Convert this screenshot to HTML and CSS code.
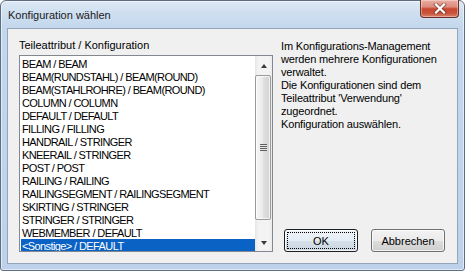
FILE: index.html
```html
<!DOCTYPE html>
<html>
<head>
<meta charset="utf-8">
<title>Konfiguration wählen</title>
<link rel="stylesheet" href="styles.css">
</head>
<body>
<div class="window">
  <div class="titlebar">
    <span class="title">Konfiguration wählen</span>
    <button class="close" aria-label="Schließen">
      <svg width="14" height="11" viewBox="0 0 14 11">
        <path d="M3 1.5 L11 9.5 M11 1.5 L3 9.5" stroke="#5a2a22" stroke-width="4" stroke-linecap="square" fill="none" opacity="0.55"/>
        <path d="M3 1.5 L11 9.5 M11 1.5 L3 9.5" stroke="#ffffff" stroke-width="2.2" stroke-linecap="square" fill="none"/>
      </svg>
    </button>
  </div>
  <div class="client">
    <div class="left">
      <div class="label">Teileattribut / Konfiguration</div>
      <div class="listbox">
        <ul class="items">
          <li>BEAM / BEAM</li>
          <li>BEAM(RUNDSTAHL) / BEAM(ROUND)</li>
          <li>BEAM(STAHLROHRE) / BEAM(ROUND)</li>
          <li>COLUMN / COLUMN</li>
          <li>DEFAULT / DEFAULT</li>
          <li>FILLING / FILLING</li>
          <li>HANDRAIL / STRINGER</li>
          <li>KNEERAIL / STRINGER</li>
          <li>POST / POST</li>
          <li>RAILING / RAILING</li>
          <li>RAILINGSEGMENT / RAILINGSEGMENT</li>
          <li>SKIRTING / STRINGER</li>
          <li>STRINGER / STRINGER</li>
          <li>WEBMEMBER / DEFAULT</li>
          <li class="sel">&lt;Sonstige&gt; / DEFAULT</li>
        </ul>
        <div class="scrollbar">
          <div class="arrow"><span class="tri up"></span></div>
          <div class="track"><div class="thumb"><span class="grip"></span></div></div>
          <div class="arrow"><span class="tri down"></span></div>
        </div>
      </div>
    </div>
    <div class="right">
      <p class="info">Im Konfigurations-Management<br>werden mehrere Konfigurationen<br>verwaltet.<br>Die Konfigurationen sind dem<br>Teileattribut 'Verwendung'<br>zugeordnet.<br>Konfiguration auswählen.</p>
      <div class="buttons">
        <button class="btn default">OK</button>
        <button class="btn">Abbrechen</button>
      </div>
    </div>
  </div>
</div>
</body>
</html>
```
FILE: styles.css
```css
html, body {
  margin: 0;
  padding: 0;
}
body {
  width: 465px;
  height: 271px;
  overflow: hidden;
  background: #ffffff;
  font-family: "Liberation Sans", Arial, sans-serif;
  font-size: 11px;
  color: #000;
}
.window {
  box-sizing: border-box;
  width: 465px;
  height: 271px;
  border: 1px solid #5d6d82;
  border-radius: 6px 6px 3px 3px;
  padding: 0 6px 6px 6px;
  background: linear-gradient(to bottom, #dde8f4 0px, #cfdff0 12px, #c3d7ed 27px, #bdd2ea 100%);
  box-shadow: inset 0 0 0 1px rgba(255,255,255,0.55);
  display: flex;
  flex-direction: column;
}
.titlebar {
  height: 27px;
  display: flex;
  justify-content: space-between;
  align-items: flex-start;
  flex: none;
}
.title {
  padding: 8px 0 0 1px;
  line-height: 13px;
  color: #1a1a1a;
}
.close {
  width: 39px;
  height: 18px;
  margin: -1px -1px 0 0;
  padding: 0;
  border: 1px solid #6b2f27;
  border-top: none;
  border-radius: 0 0 4px 4px;
  background: linear-gradient(to bottom, #e9ab9e 0%, #de8d7e 40%, #c8472f 52%, #c9533c 78%, #d8826a 100%);
  box-shadow: inset 0 0 0 1px rgba(255,255,255,0.35);
  display: flex;
  align-items: center;
  justify-content: center;
}
.close svg {
  display: block;
}
.client {
  flex: none;
  box-sizing: border-box;
  height: 236px;
  border: 1px solid #94a5bb;
  background: #f0f0f0;
  padding: 10px 12px 11px 11px;
  display: grid;
  grid-template-columns: 254px 164px;
  column-gap: 8px;
}
.left {
  display: flex;
  flex-direction: column;
}
.label {
  line-height: 13px;
  height: 13px;
  margin-bottom: 3px;
}
.listbox {
  box-sizing: border-box;
  width: 254px;
  height: 197px;
  border: 1px solid #828790;
  background: #fff;
  display: flex;
}
.items {
  flex: 1;
  list-style: none;
  margin: 0;
  padding: 1px 0 0 1px;
  overflow: hidden;
  letter-spacing: -0.6px;
}
.items li {
  box-sizing: border-box;
  height: 13px;
  line-height: 13px;
  padding: 1px 0 0 1px;
  white-space: nowrap;
}
.items li.sel {
  background: #0a62c4;
  color: #fff;
}
.scrollbar {
  flex: none;
  width: 17px;
  display: flex;
  flex-direction: column;
  background: linear-gradient(to right, #e4e4e4 0px, #f2f2f2 3px, #f4f4f4 13px, #ececec 17px);
}
.arrow {
  height: 17px;
  flex: none;
  display: flex;
  align-items: center;
  justify-content: center;
}
.tri {
  width: 0;
  height: 0;
  border-left: 3.5px solid transparent;
  border-right: 3.5px solid transparent;
}
.tri.up {
  border-bottom: 4px solid #3a3a3a;
  margin-top: 2px;
}
.tri.down {
  border-top: 4px solid #3a3a3a;
  margin-top: 0px;
}
.track {
  flex: 1;
  display: flex;
  flex-direction: column;
  padding: 2px 1px 0 0;
}
.thumb {
  box-sizing: border-box;
  height: 145px;
  border: 1px solid #9a9a9a;
  border-radius: 2px;
  background: linear-gradient(to right, #f5f5f5 0%, #ececec 45%, #dedede 55%, #d4d4d4 100%);
  box-shadow: inset 0 0 0 1px rgba(255,255,255,0.7);
  display: flex;
  align-items: center;
  justify-content: center;
}
.grip {
  width: 7px;
  height: 7px;
  background: repeating-linear-gradient(to bottom, #5e5e5e 0px, #5e5e5e 1px, #e9e9e9 1px, #e9e9e9 2px);
}
.right {
  display: flex;
  flex-direction: column;
  justify-content: space-between;
}
.info {
  margin: 0;
  padding-top: 1px;
  line-height: 13px;
  letter-spacing: -0.15px;
  white-space: nowrap;
}
.buttons {
  display: flex;
  justify-content: flex-end;
  gap: 13px;
}
.btn {
  box-sizing: border-box;
  width: 74px;
  height: 23px;
  padding: 0;
  font-family: "Liberation Sans", Arial, sans-serif;
  font-size: 11px;
  color: #000;
  border: 1px solid #707070;
  border-radius: 3px;
  background: linear-gradient(to bottom, #f2f2f2 0%, #ebebeb 50%, #dddddd 51%, #cfcfcf 100%);
  box-shadow: inset 0 0 0 1px rgba(255,255,255,0.75);
}
.btn.default {
  border-color: #1e1e1e;
  background: linear-gradient(to bottom, #eef3f8 0%, #e5ecf3 50%, #d6e0ea 51%, #cbd6e2 100%);
  outline: 1px dotted #000;
  outline-offset: -4px;
}
```
